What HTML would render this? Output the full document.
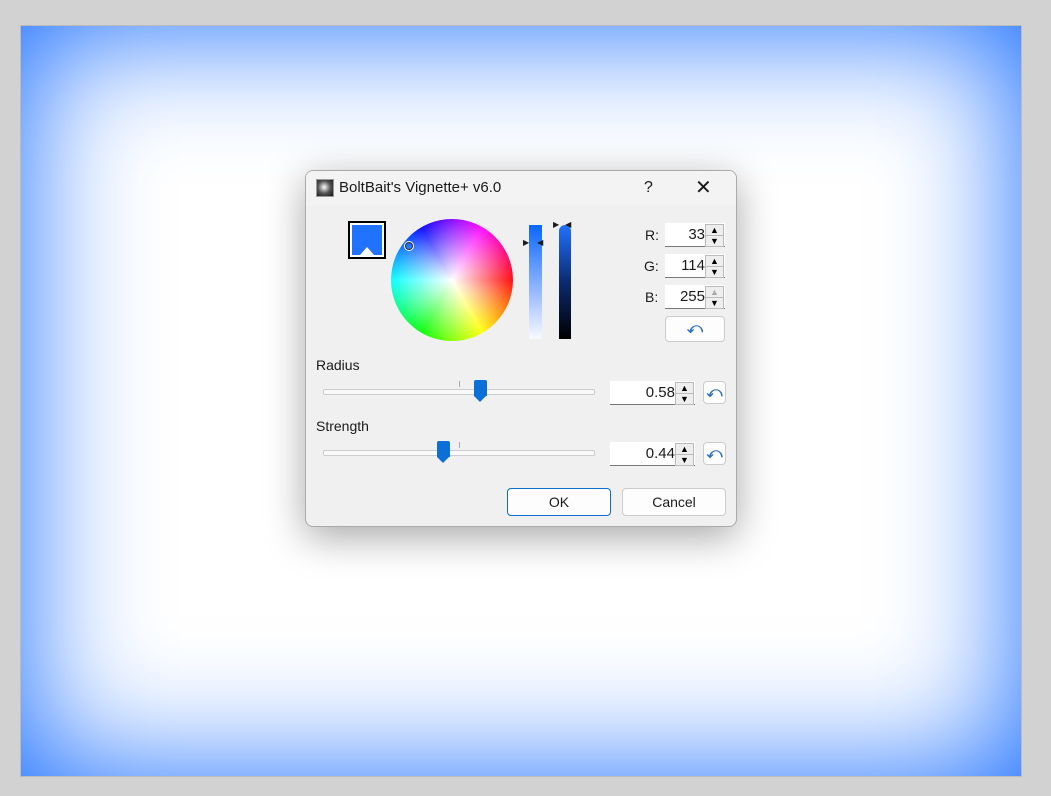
<!DOCTYPE html>
<html><head><style>
body{margin:0;width:1051px;height:796px;background:#d2d2d2;position:relative;overflow:hidden;font-family:"Liberation Sans",sans-serif;font-size:14px;color:#1a1a1a}
.cv{position:absolute;left:21px;top:26px;width:1000px;height:750px;background:#fff;box-shadow:inset 0 0 170px 5px #2172ff;outline:1px solid #bbb}
.dlg{position:absolute;left:305px;top:170px;width:432px;height:357px;box-sizing:border-box;background:#f0f0f0;border:1px solid #aaa;border-radius:8px;box-shadow:0 10px 40px rgba(0,0,0,.35);overflow:hidden}
.tb{height:35px;background:#f3f3f3;position:relative}
.a{position:absolute}
.spin{position:absolute;background:#fff;border-bottom:1px solid #777;text-align:right;box-sizing:border-box;padding-right:20px;line-height:23px;font-size:15px}
.arr{position:absolute;right:1px;width:17px;height:10px;background:#eee;border:1px solid #bbb;font-size:9px;line-height:10px;text-align:center;color:#000}
.btn{position:absolute;background:#fdfdfd;border:1px solid #ccc;border-radius:4px;text-align:center;box-sizing:border-box}
.track{position:absolute;height:4px;background:#fafafa;border:1px solid #ccc;border-radius:2px}
.thumb{position:absolute;width:13px;height:16px;background:#0a6fd6;border-radius:2px 2px 0 0}
.thumb:after{content:"";position:absolute;left:0;top:16px;border-left:6.5px solid transparent;border-right:6.5px solid transparent;border-top:6px solid #0a6fd6}
.rs{color:#2a6fc0;font-weight:bold;font-size:15px}
</style></head><body>
<div class="cv"></div>
<div class="dlg">
<div class="tb">
<div class="a" style="left:10px;top:8px;width:16px;height:16px;background:radial-gradient(circle at 45% 45%,#fff,#555 50%,#111);border:1px solid #999"></div>
<div class="a" style="left:33px;top:8px;font-size:15px">BoltBait's Vignette+ v6.0</div>
<div class="a" style="left:338px;top:8px;font-size:16px">?</div>
<div class="a" style="left:389px;top:4px;font-size:20px">✕</div>
</div>
<div class="a" style="left:42px;top:50px;width:30px;height:30px;border:2px solid #000;background:#fff;padding:2px;box-sizing:content-box"><div style="width:30px;height:30px;background:#2172ff;position:relative"><div style="position:absolute;left:8px;top:22px;border-left:7px solid transparent;border-right:7px solid transparent;border-bottom:8px solid #fff"></div></div></div>
<div class="a" style="left:85px;top:48px;width:122px;height:122px;border-radius:50%;background:radial-gradient(circle,#fff 0%,rgba(255,255,255,.6) 30%,rgba(255,255,255,0) 75%),conic-gradient(from -30deg,#00f,#f0f,#f00,#ff0,#0f0,#0ff,#00f)"></div>
<div class="a" style="left:99px;top:71px;width:6px;height:6px;border:1.5px solid #333;border-radius:50%;box-shadow:0 0 0 1px #fff"></div>
<div class="a" style="left:223px;top:54px;width:13px;height:114px;background:linear-gradient(#0a66ff,#9bbcff 60%,#f8faff)"></div>
<div class="a" style="left:217px;top:67px;font-size:8px;letter-spacing:8px">▶◀</div>
<div class="a" style="left:253px;top:54px;width:12px;height:114px;border-radius:6px 6px 0 0;background:linear-gradient(#2172ff,#0b2a70 50%,#000)"></div>
<div class="a" style="left:247px;top:49px;font-size:8px;letter-spacing:6px">▶◀</div>
<div class="a" style="left:339px;top:56px;font-size:14px">R:</div>
<div class="a" style="left:338px;top:87px;font-size:14px">G:</div>
<div class="a" style="left:339px;top:118px;font-size:14px">B:</div>
<div class="spin" style="left:359px;top:52px;width:60px;height:24px">33<div class="arr" style="top:1px">▲</div><div class="arr" style="top:12px">▼</div></div>
<div class="spin" style="left:359px;top:83px;width:60px;height:24px">114<div class="arr" style="top:1px">▲</div><div class="arr" style="top:12px">▼</div></div>
<div class="spin" style="left:359px;top:114px;width:60px;height:24px">255<div class="arr" style="top:1px;color:#aaa">▲</div><div class="arr" style="top:12px">▼</div></div>
<div class="btn rs" style="left:359px;top:145px;width:60px;height:26px;line-height:24px">⤺</div>
<div class="a" style="left:10px;top:186px">Radius</div>
<div class="track" style="left:17px;top:218px;width:270px"></div>
<div class="a" style="left:153px;top:210px;width:1px;height:6px;background:#aaa"></div>
<div class="thumb" style="left:168px;top:209px"></div>
<div class="spin" style="left:304px;top:210px;width:85px;height:24px">0.58<div class="arr" style="top:1px">▲</div><div class="arr" style="top:12px">▼</div></div>
<div class="btn rs" style="left:397px;top:210px;width:23px;height:23px;line-height:21px">⤺</div>
<div class="a" style="left:10px;top:247px">Strength</div>
<div class="track" style="left:17px;top:279px;width:270px"></div>
<div class="a" style="left:153px;top:271px;width:1px;height:6px;background:#aaa"></div>
<div class="thumb" style="left:131px;top:270px"></div>
<div class="spin" style="left:304px;top:271px;width:85px;height:24px">0.44<div class="arr" style="top:1px">▲</div><div class="arr" style="top:12px">▼</div></div>
<div class="btn rs" style="left:397px;top:271px;width:23px;height:23px;line-height:21px">⤺</div>
<div class="btn" style="left:201px;top:317px;width:104px;height:28px;line-height:26px;border-color:#0a6fd6">OK</div>
<div class="btn" style="left:316px;top:317px;width:104px;height:28px;line-height:26px">Cancel</div>
</div>
</body></html>
